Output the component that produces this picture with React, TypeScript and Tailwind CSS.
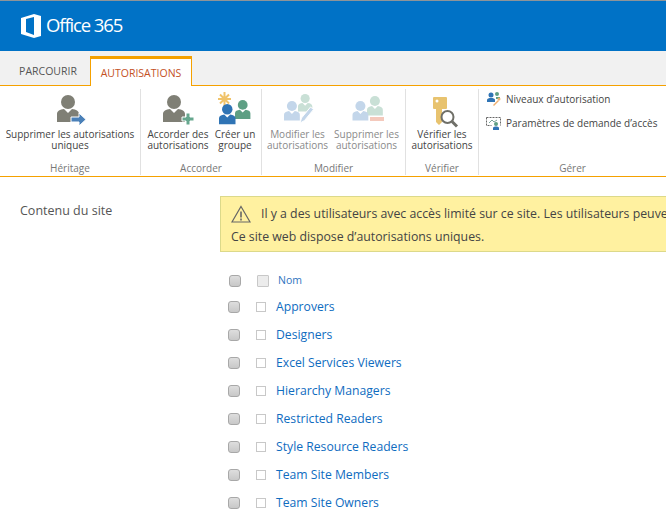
import React from "react";

const font = { fontFamily: '"Open Sans", "Noto Sans", sans-serif' };

function Person({ x, y, body, s = 1 }: { x: number; y: number; body: string; s?: number }) {
  return (
    <g transform={`translate(${x} ${y}) scale(${s})`} fill={body}>
      <circle cx="11" cy="7" r="7" />
      <path d="M0 27v-8c0-3 3-4.500 7-5l4 4 4-4c4 .5 7 2 7 5v8z" />
    </g>
  );
}

function RemoveIcon() {
  return (
    <svg width="34" height="36" viewBox="0 0 34 36">
      <Person x={4} y={3} body="#7f7f75" />
      <path d="M18 25h8v-4l7 6.500-7 6.500v-4h-8z" fill="#4a80b8" stroke="#fff" strokeWidth="1" />
    </svg>
  );
}

function GrantIcon() {
  return (
    <svg width="34" height="36" viewBox="0 0 34 36">
      <Person x={2} y={3} body="#7f7f75" />
      <path d="M25 21h4v4h4v4h-4v4h-4v-4h-4v-4h4z" fill="#66a78e" stroke="#fff" strokeWidth="1" />
    </svg>
  );
}

function GroupIcon() {
  return (
    <svg width="36" height="36" viewBox="0 0 36 36">
      <g stroke="#f0c36a" strokeWidth="2">
        <path d="M7.500 0v14M1 7h13M3 2.500l9 9M12 2.500l-9 9" />
      </g>
      <Person x={18} y={8} body="#5e9f84" s={0.7} />
      <Person x={2} y={12} body="#2f74b5" s={0.75} />
    </svg>
  );
}

function EditIcon() {
  return (
    <svg width="36" height="36" viewBox="0 0 36 36">
      <Person x={18} y={2} body="#c9e0d6" s={0.65} />
      <Person x={4} y={9} body="#c3d6ea" s={0.72} />
      <path d="M20 31l1.500-5 9-11 3 2.500-9 11z" fill="#c3d6ea" stroke="#fff" strokeWidth="1" />
    </svg>
  );
}

function DeleteIcon() {
  return (
    <svg width="36" height="36" viewBox="0 0 36 36">
      <Person x={18} y={4} body="#c9e0d6" s={0.72} />
      <Person x={3.500} y={9} body="#c3d6ea" s={0.72} />
      <rect x="21" y="25" width="14" height="4" fill="#f4c9bc" />
    </svg>
  );
}

function CheckIcon() {
  return (
    <svg width="34" height="36" viewBox="0 0 34 36">
      <path d="M9 5h12a1 1 0 0 1 1 1v10a1 1 0 0 1-1 1h-4v13l-3 3-3-3V17H9a1 1 0 0 1-1-1V6a1 1 0 0 1 1-1z" fill="#e8c36f" />
      <circle cx="12" cy="9" r="1.500" fill="#fff" />
      <circle cx="22.500" cy="25" r="6" fill="#fff" fillOpacity="0.85" stroke="#6f6f68" strokeWidth="2" />
      <path d="M27 29.500l5 5" stroke="#6f6f68" strokeWidth="3" />
    </svg>
  );
}

function LevelsIcon() {
  return (
    <svg width="16" height="16" viewBox="0 0 16 16">
      <circle cx="11" cy="3" r="2" fill="#5e9f84" />
      <circle cx="5" cy="4" r="2.500" fill="#2f74b5" />
      <path d="M1 11V9c0-1.500 2-2 4-2s4 .5 4 2v2z" fill="#2f74b5" />
      <path d="M10 6h4v2h-4z" fill="#5e9f84" />
      <circle cx="13" cy="8" r="1.500" fill="#f0b070" />
      <path d="M12 9l-5 5 1 1 5-5z" fill="#f0b070" />
    </svg>
  );
}

function RequestIcon() {
  return (
    <svg width="16" height="16" viewBox="0 0 16 16">
      <path d="M.500 2.500h14v8" fill="none" stroke="#666" strokeDasharray="2 1" />
      <path d="M.500 2.500v8h5" fill="none" stroke="#666" strokeDasharray="2 1" />
      <path d="M3 8l3-3 2 2 3-2" fill="none" stroke="#7aa59a" />
      <circle cx="10" cy="9" r="2" fill="#5e9f84" />
      <path d="M7 15v-2c0-1 1.500-1.500 3-1.500s3 .5 3 1.500v2z" fill="#2f74b5" />
    </svg>
  );
}

function RibbonButton({ icon, lines, muted, w }: { icon: React.ReactNode; lines: string[]; muted?: boolean; w: string }) {
  return (
    <div className={`flex flex-col items-center ${w}`}>
      <div className="flex h-[36px] items-center justify-center">{icon}</div>
      <div className={`mt-px text-center text-[10px] leading-[10.500px] whitespace-nowrap ${muted ? "text-[#8a8a8a]" : "text-[#444]"}`}>
        {lines.map((l) => (
          <div key={l}>{l}</div>
        ))}
      </div>
    </div>
  );
}

function Group({ label, w, children }: { label: string; w: string; children: React.ReactNode }) {
  return (
    <div className={`flex h-[86px] shrink-0 flex-col border-r border-[#e1e1e1] ${w}`}>
      <div className="flex h-[72px] justify-center pt-[3px]">{children}</div>
      <div className="text-center text-[10px] leading-[14px] text-[#777]">{label}</div>
    </div>
  );
}

const names = [
  "Approvers",
  "Designers",
  "Excel Services Viewers",
  "Hierarchy Managers",
  "Restricted Readers",
  "Style Resource Readers",
  "Team Site Members",
  "Team Site Owners",
];

export default function App() {
  return (
    <div className="h-[510px] w-[666px] overflow-hidden bg-white" style={font}>
      <div className="h-px bg-[#8d9499]" />
      <div className="flex h-[50px] items-center bg-[#0072c6] pl-[21px]">
        <svg width="20" height="24" viewBox="0 0 20 24" className="mb-px">
          <path d="M0 4L13 0l7 2v20l-7 2-13-4zM13 3L5 5v13l8 3z" fill="#fff" fillRule="evenodd" />
        </svg>
        <span className="mb-px ml-[5px] text-[18.500px] leading-none tracking-[-1.1px] text-white">Office 365</span>
      </div>

      <div className="flex h-[35px] items-end border-b border-[#f5a100] bg-[#f1f1f1]">
        <div className="flex h-[29px] w-[90px] items-center justify-center pl-[6px] pt-[3px] text-[10.500px] text-[#555]">PARCOURIR</div>
        <div className="-mb-px flex h-[30px] w-[102px] items-center justify-center border-x border-t-[3px] border-x-[#f5a100] border-t-[#f5a100] bg-white pt-[2px] text-[10.500px] text-[#c4511f]">
          AUTORISATIONS
        </div>
      </div>

      <div className="flex h-[91px] overflow-hidden border-b border-[#f5a100] pt-[3px]">
        <Group label="Héritage" w="w-[141px]">
          <RibbonButton icon={<RemoveIcon />} lines={["Supprimer les autorisations", "uniques"]} w="w-[136px]" />
        </Group>
        <Group label="Accorder" w="w-[121px]">
          <RibbonButton icon={<GrantIcon />} lines={["Accorder des", "autorisations"]} w="w-[68px]" />
          <RibbonButton icon={<GroupIcon />} lines={["Créer un", "groupe"]} w="w-[46px]" />
        </Group>
        <Group label="Modifier" w="w-[144px]">
          <RibbonButton icon={<EditIcon />} lines={["Modifier les", "autorisations"]} muted w="w-[66px]" />
          <RibbonButton icon={<DeleteIcon />} lines={["Supprimer les", "autorisations"]} muted w="w-[72px]" />
        </Group>
        <Group label="Vérifier" w="w-[73px]">
          <RibbonButton icon={<CheckIcon />} lines={["Vérifier les", "autorisations"]} w="w-[70px]" />
        </Group>
        <div className="flex h-[86px] min-w-0 flex-1 flex-col">
          <div className="flex h-[72px] flex-col gap-[8px] pl-[7px] pt-[2px] text-[10px] leading-[16px] whitespace-nowrap text-[#444]">
            <div className="flex items-center gap-[4px]">
              <LevelsIcon />
              <span>Niveaux d’autorisation</span>
            </div>
            <div className="flex items-center gap-[4px]">
              <RequestIcon />
              <span>Paramètres de demande d’accès</span>
            </div>
          </div>
          <div className="text-center text-[10px] leading-[14px] text-[#777]">Gérer</div>
        </div>
      </div>

      <div className="flex">
        <div className="w-[220px] shrink-0 pl-[20px] pt-[25px] text-[12.500px] leading-[18px] text-[#555]">Contenu du site</div>
        <div className="min-w-0 flex-1 pt-[19px]">
          <div className="h-[56px] w-[460px] overflow-hidden border border-[#dcd98a] bg-[#fff1a0] pl-[10px] pt-[6px] text-[12.300px] leading-[22px] whitespace-nowrap text-[#444]">
            <div className="flex items-center gap-[10px]">
              <svg width="20" height="18" viewBox="0 0 20 18" className="shrink-0">
                <path d="M10 1.500L19 17H1z" fill="none" stroke="#666" strokeWidth="1.200" />
                <path d="M10 6.500v6M10 13.500v2" stroke="#666" strokeWidth="1.600" />
              </svg>
              <span>Il y a des utilisateurs avec accès limité sur ce site. Les utilisateurs peuvent</span>
            </div>
            <div className="mt-px">Ce site web dispose d’autorisations uniques.</div>
          </div>

          <div className="mt-[18px] flex h-[22px] items-center pl-[9px]">
            <div className="h-[12px] w-[12px] rounded-[3px] border border-[#a8a8a8] bg-linear-to-b from-[#dedede] to-[#c8c8c8]" />
            <div className="ml-[16px] h-[12px] w-[12px] rounded-[1px] border border-[#c8c8c8] bg-[#ececec]" />
            <span className="ml-[9px] text-[10.500px] text-[#2f74c0]">Nom</span>
          </div>

          <div className="mt-px">
            {names.map((name) => (
              <div key={name} className="flex h-[28px] items-center pl-[8px]">
                <div className="mb-px h-[12px] w-[12px] rounded-[3px] border border-[#a8a8a8] bg-linear-to-b from-[#dedede] to-[#c8c8c8]" />
                <div className="mb-px ml-[16px] h-[10px] w-[10px] border border-[#c8c8c8] bg-white" />
                <span className="ml-[10px] text-[12.200px] text-[#0f6cbf]">{name}</span>
              </div>
            ))}
          </div>
        </div>
      </div>
    </div>
  );
}
